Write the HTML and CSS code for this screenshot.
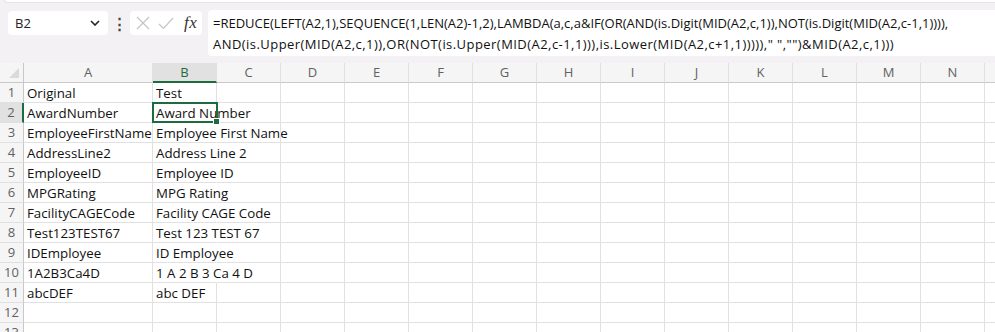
FILE: index.html
```html
<!DOCTYPE html>
<html lang="en">
<head>
  <meta charset="UTF-8" />
  <title>Book1 - Excel</title>
  <link rel="stylesheet" href="styles.css">
</head>
<body>

<div class="ribbon-edge"></div>

<div class="formula-row">
  <div class="name-box">
    <span>B2</span>
    <svg class="chevron" width="10" height="6" viewBox="0 0 10 6"><path d="M1 1l4 4 4-4" fill="none" stroke="#222" stroke-width="1.6"/></svg>
  </div>
  <div class="dots">&#8942;</div>
  <div class="fx-box">
    <svg width="14" height="14" viewBox="0 0 14 14"><path d="M1 1l12 12M13 1L1 13" stroke="#c4c4c4" stroke-width="1.2" fill="none"/></svg>
    <svg width="16" height="14" viewBox="0 0 16 14"><path d="M1 8l4.5 4.5L15 2" stroke="#c4c4c4" stroke-width="1.2" fill="none"/></svg>
    <span class="fx"><i>f</i><i>x</i></span>
  </div>
  <div class="formula">
    <div>=REDUCE(LEFT(A2,1),SEQUENCE(1,LEN(A2)-1,2),LAMBDA(a,c,a&amp;IF(OR(AND(is.Digit(MID(A2,c,1)),NOT(is.Digit(MID(A2,c-1,1)))),</div>
    <div class="line2">AND(is.Upper(MID(A2,c,1)),OR(NOT(is.Upper(MID(A2,c-1,1))),is.Lower(MID(A2,c+1,1))))),"&nbsp;",""&#41;&amp;MID(A2,c,1)))</div>
  </div>
</div>

<div class="sheet" id="sheet"></div>

<script>
  const cols = ['A','B','C','D','E','F','G','H','I','J','K','L','M','N','O'];
  const data = [
    ['Original', 'Test'],
    ['AwardNumber', 'Award Number'],
    ['EmployeeFirstName', 'Employee First Name'],
    ['AddressLine2', 'Address Line 2'],
    ['EmployeeID', 'Employee ID'],
    ['MPGRating', 'MPG Rating'],
    ['FacilityCAGECode', 'Facility CAGE Code'],
    ['Test123TEST67', 'Test 123 TEST 67'],
    ['IDEmployee', 'ID Employee'],
    ['1A2B3Ca4D', '1 A 2 B 3 Ca 4 D'],
    ['abcDEF', 'abc DEF'],
    ['', ''],
    ['', '']
  ];

  const sheet = document.getElementById('sheet');
  let html = '<div class="corner"></div>';
  cols.forEach(c => {
    html += `<div class="col-head${c === 'B' ? ' active' : ''}">${c}</div>`;
  });

  data.forEach((row, i) => {
    const r = i + 1;
    html += `<div class="row-head${r === 2 ? ' active' : ''}">${r}</div>`;
    cols.forEach((c, j) => {
      const text = row[j] || '';
      let cls = 'cell';
      if (c === 'B' && r >= 2 && r <= 10) cls += ' spill';
      if (c === 'B' && r === 2) cls += ' selected';
      html += `<div class="${cls}">${text}</div>`;
    });
  });
  sheet.innerHTML = html;
</script>

</body>
</html>
```

FILE: styles.css
```css
body {
  margin: 0;
  background: #f3f1f3;
  font-family: "Open Sans", "Noto Sans", sans-serif;
  overflow: hidden;
  width: 995px;
  height: 332px;
}
.ribbon-edge {
  height: 2px;
  background: #fff;
  margin: 0 0 0 4px;
  border-bottom: 1px solid #e6e3e6;
  border-left: 1px solid #e6e3e6;
  border-bottom-left-radius: 4px;
}

/* formula bar */
.formula-row {
  display: flex;
  align-items: flex-start;
  padding: 8px 0 0 8px;
  height: 60px;
  box-sizing: border-box;
}
.name-box {
  width: 100px;
  height: 24px;
  background: #fff;
  border-radius: 4px;
  box-sizing: border-box;
  padding: 0 8px 0 7px;
  display: flex;
  align-items: center;
  justify-content: space-between;
  font-size: 13px;
  color: #222;
}
.dots {
  width: 22px;
  text-align: center;
  font-size: 15px;
  line-height: 24px;
  color: #444;
  font-weight: bold;
}
.fx-box {
  width: 72px;
  height: 24px;
  background: #fff;
  border-radius: 4px;
  display: flex;
  align-items: center;
  gap: 8px;
  padding-left: 6px;
  box-sizing: border-box;
}
.fx {
  font-family: "Liberation Serif", serif;
  font-size: 17px;
  color: #333;
  margin-left: 2px;
  letter-spacing: 0.5px;
}
.formula {
  margin: -1px 0 0 6px;
  flex: 1;
  height: 46px;
  background: #fff;
  border-radius: 4px 0 0 4px;
  padding: 3px 0 0 5px;
  box-sizing: border-box;
  font-size: 13px;
  line-height: 21px;
  color: #111;
  white-space: nowrap;
  overflow: hidden;
}
.formula .line2 {
  letter-spacing: 0.45px;
}

/* grid */
.sheet {
  display: grid;
  grid-template-columns: 24px 129px repeat(14, 64px);
  grid-auto-rows: 20px;
  background: #fff;
  font-size: 13.3px;
  color: #111;
}
.corner {
  background: #f5f5f5;
  border-right: 1px solid #c8c8c8;
  border-bottom: 1px solid #c8c8c8;
  position: relative;
}
.corner::after {
  content: "";
  position: absolute;
  right: 4px;
  bottom: 4px;
  border-left: 10px solid transparent;
  border-bottom: 10px solid #dadada;
}
.col-head {
  background: #f5f5f5;
  border-right: 1px solid #e0e0e0;
  border-bottom: 1px solid #c8c8c8;
  text-align: center;
  color: #616161;
  font-size: 13px;
  line-height: 19px;
}
.col-head.active {
  background: #e1e1e1;
  color: #1e6b3f;
  border-bottom: 2px solid #1e6b3f;
}
.row-head {
  background: #f5f5f5;
  border-right: 1px solid #c8c8c8;
  border-bottom: 1px solid #e0e0e0;
  text-align: center;
  color: #616161;
  font-size: 13px;
  line-height: 19px;
}
.row-head.active {
  background: #e1e1e1;
  border-right: 2px solid #1e6b3f;
}
.cell {
  border-right: 1px solid #e1e1e1;
  border-bottom: 1px solid #e1e1e1;
  padding-left: 3px;
  white-space: nowrap;
  line-height: 20px;
}
.cell.spill {
  border-right-color: transparent;
}
.cell.selected {
  position: relative;
}
.cell.selected::before {
  content: "";
  position: absolute;
  left: -1px;
  top: -1px;
  right: -2px;
  bottom: -1px;
  border: 2px solid #1e6b3f;
}
.cell.selected::after {
  content: "";
  position: absolute;
  right: -4px;
  bottom: -3px;
  width: 5px;
  height: 5px;
  background: #1e6b3f;
  border: 1px solid #fff;
}
```
